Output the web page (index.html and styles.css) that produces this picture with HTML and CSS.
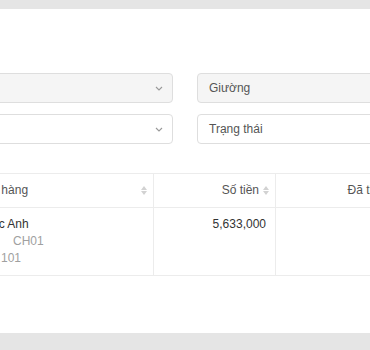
FILE: index.html
```html
<!DOCTYPE html>
<html lang="vi">
<head>
    <meta charset="UTF-8">
    <meta name="viewport" content="width=device-width, initial-scale=1.0">
    <title>Hóa đơn</title>
    <link rel="stylesheet" href="styles.css">
</head>
<body>
    <div class="panel">
        <div class="filters">
            <div class="field select disabled">
                <span class="value"></span>
                <svg class="chevron" width="8" height="5" viewBox="0 0 8 5"><path d="M1 1l3 3 3-3" fill="none" stroke="#999" stroke-width="1.1"/></svg>
            </div>
            <div class="field disabled"><span class="value">Giường</span></div>
            <div class="field select">
                <span class="value"></span>
                <svg class="chevron" width="8" height="5" viewBox="0 0 8 5"><path d="M1 1l3 3 3-3" fill="none" stroke="#999" stroke-width="1.1"/></svg>
            </div>
            <div class="field"><span class="value">Trạng thái</span></div>
        </div>

        <table class="bills">
            <thead>
                <tr>
                    <th class="col-name"><div class="th-inner spread">Khách hàng <span class="sorter"></span></div></th>
                    <th class="col-money"><div class="th-inner">Số tiền <span class="sorter"></span></div></th>
                    <th class="col-paid"><div class="th-inner">Đã thanh toán <span class="sorter"></span></div></th>
                </tr>
            </thead>
            <tbody>
                <tr>
                    <td class="customer">
                        <div class="name">Lê Ngọc Anh</div>
                        <div class="sub"><span class="label">Căn hộ</span>CH01</div>
                        <div class="sub"><span class="label short">Phòng</span>101</div>
                    </td>
                    <td class="num">5,633,000</td>
                    <td class="num"></td>
                </tr>
            </tbody>
        </table>
    </div>
</body>
</html>
```

FILE: styles.css
```css
html, body {
    margin: 0;
    height: 100%;
    overflow: hidden;
}
body {
    background-color: #e5e5e5;
    font-family: "Liberation Sans", Arial, sans-serif;
    font-size: 12px;
    color: #333;
    padding-top: 9px;
    box-sizing: border-box;
}
.panel {
    background: white;
    height: 324px;
    width: 700px;
    margin-left: -45px;
    padding-top: 64px;
    box-sizing: border-box;
}
.filters {
    display: grid;
    grid-template-columns: 218px 218px;
    column-gap: 24px;
    row-gap: 11px;
}
.field {
    height: 30px;
    box-sizing: border-box;
    border: 1px solid #dedede;
    border-radius: 4px;
    background: white;
    display: flex;
    align-items: center;
    padding: 0 11px;
    color: #555;
}
.field.disabled {
    background: #f5f5f5;
}
.value {
    flex: 1;
}
.chevron {
    margin-right: -2px;
}
.bills {
    margin-top: 29px;
    border-collapse: collapse;
    border-top: 1px solid #ececec;
}
.bills th, .bills td {
    border-bottom: 1px solid #ececec;
    border-right: 1px solid #ececec;
    padding: 8px 9px;
    line-height: 17px;
    vertical-align: top;
}
.bills th {
    font-weight: normal;
    color: #555;
    padding-right: 6px;
}
.col-name { width: 183px; }
.col-money { width: 106px; }
.col-paid { width: 148px; }
.th-inner {
    display: flex;
    align-items: center;
    justify-content: flex-end;
    gap: 4px;
}
.th-inner.spread {
    justify-content: space-between;
}
.sorter {
    display: inline-block;
    position: relative;
    width: 6px;
    height: 9px;
}
.sorter::before, .sorter::after {
    content: "";
    position: absolute;
    left: 0;
    border-left: 3px solid transparent;
    border-right: 3px solid transparent;
}
.sorter::before {
    top: 0;
    border-bottom: 4px solid #d2d2d2;
}
.sorter::after {
    bottom: 0;
    border-top: 4px solid #d2d2d2;
}
.bills td.customer {
    padding-left: 5px;
}
.bills td.num {
    text-align: right;
}
.name {
    color: #333;
}
.sub {
    color: #a0a0a0;
}
.label {
    display: inline-block;
    width: 53px;
}
.label.short {
    width: 41px;
}
```
